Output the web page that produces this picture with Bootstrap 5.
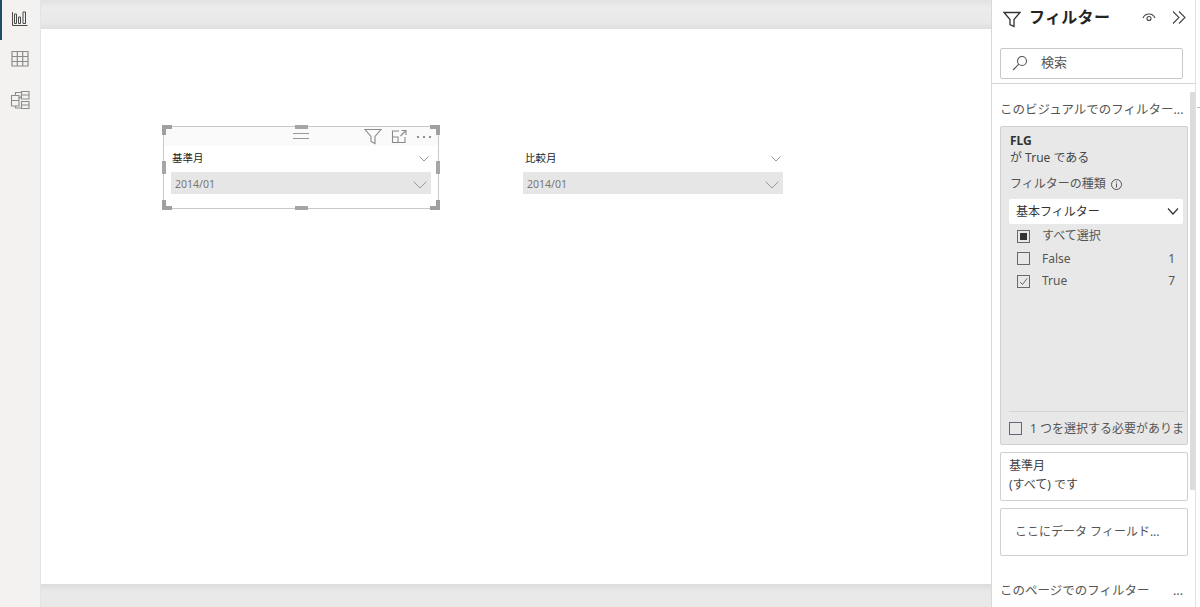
<!DOCTYPE html>
<html lang="ja">
<head>
<meta charset="UTF-8">
<title>Power BI フィルター</title>
<link href="https://cdn.jsdelivr.net/npm/bootstrap@5.3.3/dist/css/bootstrap.min.css" rel="stylesheet">
<style>
html, body { height: 100%; }
body { width: 1200px; height: 607px; overflow: hidden; background: #fff; color: #333; font-family: "Noto Sans", "Noto Sans CJK JP", sans-serif; font-size: 12px; }
.rail { width: 41px; background: #f3f2f1; border-right: 1px solid #e3e3e3; flex: none; }
.rail-item { height: 40px; border-left: 2px solid transparent; }
.rail-item.on { border-left-color: #1c4f63; }
.rail-item svg { display: block; margin-left: 8px; }
.workspace { width: 950px; flex: none; background: linear-gradient(#e2e2e2, #ececec 8px, #e9e9e9 22px, #dedede 29px); padding-top: 29px; }
.workspace-low { height: 23px; background: linear-gradient(#dcdcdc, #e9e9e9 8px); }
.report-page { height: 555px; background: #fff; position: relative; }
.slicer { position: absolute; width: 260px; }
.slicer-a { left: 130px; top: 119px; }
.slicer-b { left: 482px; top: 119px; }
.slicer-head { height: 20px; padding: 1px 1px 0; font-size: 10.5px; color: #222; }
.slicer-b .slicer-head { padding-left: 2px; }
.slicer-value { height: 22px; margin-top: 4px; background: #e6e6e6; color: #777; font-size: 10.5px; padding: 3px 4px 0; }
.head-chevron { margin-right: 1px; }
.select-frame { position: absolute; left: 122px; top: 97px; width: 276px; height: 83px; border: 1px solid #c8c8c8; }
.select-top { position: absolute; left: 0; right: 0; top: 0; height: 19px; background: #fafafa; }
.frame-grip { position: absolute; background: #a6a6a6; }
.frame-corner { position: absolute; width: 10px; height: 10px; border: 0 solid #a0a0a0; }
.frame-tools { position: absolute; right: 6px; top: 1px; gap: 9px; }
.panel { width: 209px; flex: none; position: relative; border-left: 1px solid #d8d8d8; }
.panel-body { width: 204px; height: 607px; border-right: 1px solid #e1e1e1; overflow: hidden; }
.panel-title { height: 48px; padding: 8px 0 0 11px; }
.panel-title h1 { font-size: 16px; font-weight: 700; margin: 0 0 0 8px; color: #252423; letter-spacing: .3px; }
.panel-search { width: 183px; height: 31px; margin-left: 8px; border: 1px solid #c8c8c8; border-radius: 2px; padding: 0 0 2px 11px; font-size: 13px; color: #555; gap: 13px; }
.panel-rule { height: 1px; background: #d6d6d6; margin-top: 4px; }
.section-label { font-size: 12.5px; color: #555; margin: 17px 0 0 8px; line-height: 18px; white-space: nowrap; }
.filter-box { width: 188px; margin-left: 8px; border: 1px solid #d0d0d0; border-radius: 2px; }
.filter-on { height: 319px; margin-top: 7px; background: #e8e8e8; padding: 7px 0 0 9px; position: relative; overflow: hidden; }
.filter-name { font-weight: 700; line-height: 14px; color: #333; }
.filter-desc { line-height: 20px; color: #444; }
.filter-kind { margin-top: 7px; line-height: 18px; color: #555; gap: 4px; }
.filter-select { width: 174px; height: 25px; background: #fff; border-radius: 2px; margin: 6px 0 0 -1px; padding: 0 4px 0 7px; color: #333; }
.filter-row { height: 22.5px; width: 158px; color: #555; margin-left: 7px; }
.filter-row.first { margin-top: 1px; }
.tick { width: 13px; height: 13px; border: 1px solid #6b6478; flex: none; margin-right: 12px; position: relative; }
.tick.part::after { content: ""; position: absolute; inset: 2px; background: #333; }
.filter-foot { position: absolute; left: 8px; right: 2px; top: 284px; border-top: 1px solid #d6d6d6; padding-top: 5px; height: 29px; white-space: nowrap; color: #555; }
.filter-foot .tick { margin-right: 8px; }
.filter-plain { height: 49px; margin-top: 7px; padding: 3px 0 0 8px; line-height: 19px; color: #444; }
.filter-drop { height: 48px; margin-top: 7px; padding: 13px 0 0 14px; line-height: 20px; color: #555; }
.page-label { margin-top: 26px; margin-right: 12px; }
.panel-scroll { position: absolute; left: 198px; top: 92px; width: 5px; height: 398px; background: #dcdcdc; }
.edge-mark { position: absolute; left: 205px; top: 107px; width: 4px; height: 1px; background: #bbb; }
</style>
</head>
<body>
<div class="d-flex">
    <!-- left rail -->
    <div class="rail">
        <div class="rail-item on">
            <svg width="20" height="40" viewBox="0 0 20 40" fill="none" stroke="#4a4a4a" stroke-width="1"><path d="M2.500 12v13.500h15M4.500 23.500v-9.500h2v9.500zM8.500 23.500v-6.500h2v6.500zM13 23.500v-11.500h2.500v11.500z"/></svg>
        </div>
        <div class="rail-item">
            <svg width="20" height="40" viewBox="0 0 20 40" fill="none" stroke="#8c8c8c" stroke-width="1.200"><path d="M2 11.500h16v14.500h-16zM2 16.500h16M2 21.500h16M7.300 11.500v14.500M12.700 11.500v14.500"/></svg>
        </div>
        <div class="rail-item">
            <svg width="22" height="40" viewBox="0 0 22 40" fill="none" stroke="#8c8c8c" stroke-width="1.100"><path d="M1.500 15.500h7.500v10.500h-7.500zM1.500 20.500h7.500M11.500 11.500h7.500v7.500h-7.500zM11.500 15h7.500M11.500 21.500h7.500v7h-7.500zM11.500 25h7.500M5.500 15.500v-3h6M9 18.500l2.500-2M5.500 26v2h6"/></svg>
        </div>
    </div>
    <!-- report canvas -->
    <div class="workspace">
        <div class="report-page">
            <div class="select-frame">
                <div class="select-top"></div>
                <div class="frame-corner" style="left:-2px;top:-2px;border-width:4px 0 0 4px"></div>
                <div class="frame-corner" style="right:-2px;top:-2px;border-width:4px 4px 0 0"></div>
                <div class="frame-corner" style="left:-2px;bottom:-2px;border-width:0 0 4px 4px"></div>
                <div class="frame-corner" style="right:-2px;bottom:-2px;border-width:0 4px 4px 0"></div>
                <div class="frame-grip" style="left:131px;top:-2px;width:13px;height:4px"></div>
                <div class="frame-grip" style="left:131px;bottom:-2px;width:13px;height:4px"></div>
                <div class="frame-grip" style="left:-2px;top:34px;width:4px;height:13px"></div>
                <div class="frame-grip" style="right:-2px;top:34px;width:4px;height:13px"></div>
                <svg class="position-absolute" style="left:128px;top:5px" width="18" height="8" fill="none" stroke="#999"><path d="M1 1.500h16M1 6.500h16"/></svg>
                <div class="frame-tools d-flex align-items-center">
                    <svg width="18" height="17" viewBox="0 0 18 17" fill="none" stroke="#8a8a8a" stroke-width="1.100"><path d="M1 1.500h16l-6 7v7l-4-2v-5z"/></svg>
                    <svg width="16" height="15" viewBox="0 0 16 15" fill="none" stroke="#8a8a8a" stroke-width="1.100"><path d="M8 2H1.500v11.500H14V8M1.500 8H7v5.500M9.500 7l5-5M10.500 1.500h4.500v4.500"/></svg>
                    <svg width="16" height="4" viewBox="0 0 16 4" fill="#777"><circle cx="2" cy="2" r="1.100"/><circle cx="8" cy="2" r="1.100"/><circle cx="14" cy="2" r="1.100"/></svg>
                </div>
            </div>
            <div class="slicer slicer-a">
                <div class="slicer-head d-flex justify-content-between align-items-center"><span>基準月</span>
                    <svg class="head-chevron" width="10" height="6" fill="none" stroke="#999"><path d="M.5 .5 5 5 9.500 .5"/></svg></div>
                <div class="slicer-value d-flex justify-content-between align-items-center"><span>2014/01</span>
                    <svg width="14" height="8" fill="none" stroke="#999"><path d="M.5 .5 7 7 13.500 .5"/></svg></div>
            </div>
            <div class="slicer slicer-b">
                <div class="slicer-head d-flex justify-content-between align-items-center"><span>比較月</span>
                    <svg class="head-chevron" width="10" height="6" fill="none" stroke="#999"><path d="M.5 .5 5 5 9.500 .5"/></svg></div>
                <div class="slicer-value d-flex justify-content-between align-items-center"><span>2014/01</span>
                    <svg width="14" height="8" fill="none" stroke="#999"><path d="M.5 .5 7 7 13.500 .5"/></svg></div>
            </div>
        </div>
        <div class="workspace-low"></div>
    </div>
    <!-- filter pane -->
    <div class="panel">
        <div class="panel-body">
            <div class="panel-title d-flex align-items-start">
                <svg style="margin-top:3px" width="18" height="17" viewBox="0 0 18 17" fill="none" stroke="#333" stroke-width="1.300"><path d="M1 1.500h16l-6 7v7l-4-2v-5z"/></svg>
                <h1>フィルター</h1>
                <svg class="position-absolute" style="left:150px;top:13px" width="14" height="10" viewBox="0 0 14 10" fill="none" stroke="#444" stroke-width="1.100"><path d="M1 5a6.500 6.500 0 0 1 12 0"/><circle cx="7" cy="5.500" r="2"/></svg>
                <svg class="position-absolute" style="left:180px;top:11px" width="14" height="13" viewBox="0 0 14 13" fill="none" stroke="#444" stroke-width="1.100"><path d="M1 .5 7 6.500 1 12.500M7 .5 13 6.500 7 12.500"/></svg>
            </div>
            <div class="panel-search d-flex align-items-center">
                <svg width="16" height="16" viewBox="0 0 16 16" fill="none" stroke="#555" stroke-width="1.100"><circle cx="10" cy="6" r="4.500"/><path d="M6.800 9.200 1 15"/></svg>
                <span>検索</span>
            </div>
            <div class="panel-rule"></div>
            <div class="section-label">このビジュアルでのフィルター...</div>
            <div class="filter-box filter-on">
                <div class="filter-name">FLG</div>
                <div class="filter-desc">が True である</div>
                <div class="filter-kind d-flex align-items-center">フィルターの種類
                    <svg width="13" height="13" viewBox="0 0 13 13" fill="none" stroke="#555"><circle cx="6.500" cy="6.500" r="5"/><path d="M6.500 5.500v4M6.500 3.500v1"/></svg></div>
                <div class="filter-select d-flex justify-content-between align-items-center"><span>基本フィルター</span>
                    <svg width="12" height="7" fill="none" stroke="#333" stroke-width="1.200"><path d="M1 .5 6 6 11 .5"/></svg></div>
                <div class="filter-row first d-flex align-items-center"><span class="tick part"></span><span class="flex-grow-1">すべて選択</span></div>
                <div class="filter-row d-flex align-items-center"><span class="tick"></span><span class="flex-grow-1">False</span><span>1</span></div>
                <div class="filter-row d-flex align-items-center"><span class="tick"><svg class="d-block" width="11" height="11" fill="none" stroke="#666"><path d="M2 6l2.500 2.500L9 2.500"/></svg></span><span class="flex-grow-1">True</span><span>7</span></div>
                <div class="filter-foot d-flex align-items-center"><span class="tick"></span><span>1 つを選択する必要がありま</span></div>
            </div>
            <div class="filter-box filter-plain">基準月<br>(すべて) です</div>
            <div class="filter-box filter-drop">ここにデータ フィールド...</div>
            <div class="section-label page-label d-flex justify-content-between">
                <span>このページでのフィルター</span><span>...</span>
            </div>
        </div>
        <div class="panel-scroll"></div>
        <div class="edge-mark"></div>
    </div>
</div>
<script src="https://cdn.jsdelivr.net/npm/bootstrap@5.3.3/dist/js/bootstrap.bundle.min.js"></script>
</body>
</html>
